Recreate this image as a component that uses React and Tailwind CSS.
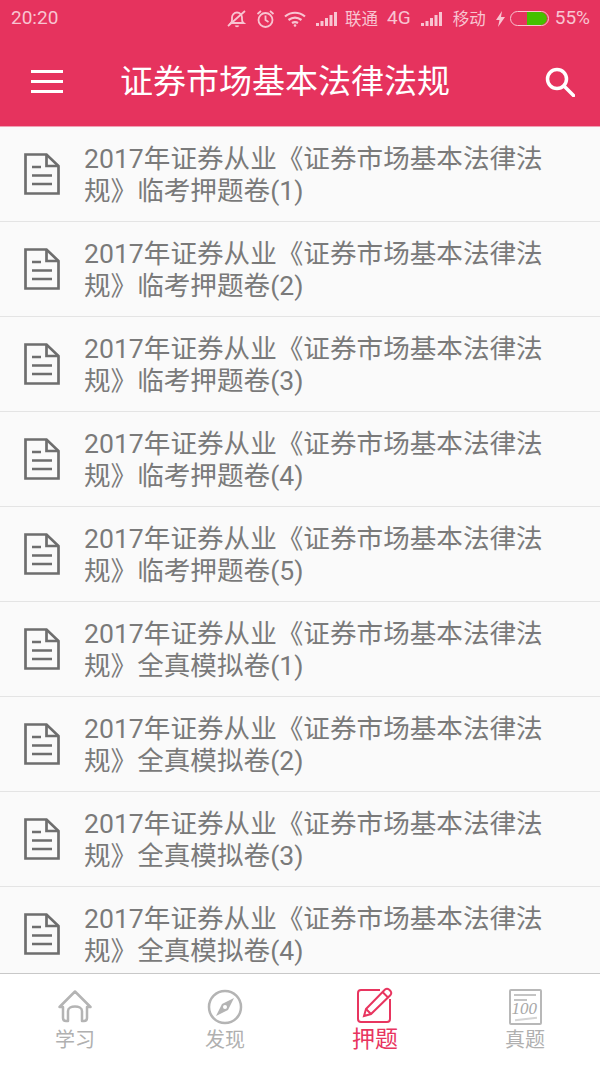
import React from 'react';

const papers = [
  '临考押题卷(1)', '临考押题卷(2)', '临考押题卷(3)', '临考押题卷(4)', '临考押题卷(5)',
  '全真模拟卷(1)', '全真模拟卷(2)', '全真模拟卷(3)', '全真模拟卷(4)',
];

const Signal = () => (
  <svg width="21" height="15" viewBox="0 0 21 15" fill="currentColor">
    <rect x="0" y="12" width="3" height="3" />
    <rect x="4.500" y="10" width="3" height="5" />
    <rect x="9" y="7" width="3" height="8" />
    <rect x="13.500" y="4" width="3" height="11" />
    <rect x="18" y="1" width="3" height="14" />
  </svg>
);

const StatusBar = () => (
  <div className="h-[37px] flex items-center justify-between pl-[11px] pr-[10px] text-[#f8c4d1] text-[19px] font-['Roboto',sans-serif]">
    <span>20:20</span>
    <div className="flex items-center">
      {/* muted bell */}
      <svg className="mr-[9px]" width="20" height="20" viewBox="0 0 20 20" fill="none" stroke="currentColor" strokeWidth="1.800">
        <path d="M4 14c1.500-1.500 1-3 1-5.500C5 6 7 3.500 10 3.500S15 6 15 8.500c0 2.500-.5 4 1.500 5.500z" />
        <path d="M8.500 16.500c.5 1.200 2.500 1.200 3 0" />
        <path d="M1 17 18 2" />
      </svg>
      {/* alarm clock */}
      <svg className="mr-[9px]" width="19" height="20" viewBox="0 0 19 20" fill="none" stroke="currentColor" strokeWidth="1.800">
        <circle cx="9.500" cy="11" r="7" />
        <path d="M9.500 6.500V11l3 2" />
        <path d="M1.500 5 5 2M17.500 5 14 2" />
      </svg>
      {/* wifi */}
      <svg className="mr-[10px]" width="22" height="16" viewBox="0 0 22 16" fill="none" stroke="currentColor" strokeWidth="2.200">
        <path d="M1 5.500c6-5 14-5 20 0" />
        <path d="M4.500 9c4-3 9-3 13 0" />
        <path d="M8 12c2-1.300 4-1.300 6 0" />
        <circle cx="11" cy="14.500" r="1.300" fill="currentColor" stroke="none" />
      </svg>
      <Signal />
      <span className="ml-[8px] mr-[9px] font-['Noto_Sans_CJK_SC',sans-serif] text-[16.500px]">联通</span>
      <span className="mr-[10px]">4G</span>
      <Signal />
      <span className="ml-[11px] mr-[10px] font-['Noto_Sans_CJK_SC',sans-serif] text-[16.500px]">移动</span>
      <svg className="mr-[5px]" width="9" height="16" viewBox="0 0 9 16" fill="currentColor">
        <path d="M6 0 0 9h3.500L2 16l7-10H5z" />
      </svg>
      <div className="w-[39px] h-[15px] rounded-full border border-[#f8c4d1] flex justify-end items-center pr-[1px] mr-[6px]">
        <div className="w-[20px] h-[13px] bg-[#45c000] rounded-r-full" />
      </div>
      <span>55%</span>
    </div>
  </div>
);

const Header = () => (
  <div className="bg-[#e6335e] shrink-0 h-[127px] border-b border-[#f0a0b4]">
    <StatusBar />
    <div className="h-[89px] flex items-center pl-[31px] pr-[25px]">
      {/* three bar menu */}
      <svg width="32" height="23" viewBox="0 0 32 23" fill="#fff">
        <rect x="0" y="0" width="32" height="3" />
        <rect x="0" y="10" width="32" height="3" />
        <rect x="0" y="20" width="32" height="3" />
      </svg>
      <h1 className="ml-[57px] flex-1 text-white text-[33px] font-normal whitespace-nowrap">证券市场基本法律法规</h1>
      <svg width="30" height="30" viewBox="0 0 30 30" fill="none" stroke="#fff" strokeWidth="3.500">
        <circle cx="12" cy="12" r="9.500" />
        <path d="M19 19 28.500 28.500" strokeLinecap="round" />
      </svg>
    </div>
  </div>
);

const DocIcon = () => (
  <svg width="36" height="42" viewBox="0 0 36 42" fill="none" stroke="#6e6e6e" strokeWidth="2.700">
    <path d="M1.500 1.500h21L34.500 13v27.500h-33z" />
    <path d="M22.500 1.500V13h12" />
    <path d="M8 14h9M8 22.500h20M8 31h20" />
  </svg>
);

const PaperRow = ({ name }) => (
  <div className="h-[95px] pl-[16px] border-b border-[#e4e4e4] flex items-center shrink-0">
    <div className="ml-[8px] w-[36px] shrink-0 mr-[24px]">
      <DocIcon />
    </div>
    <p className="text-[#7a7a7a] text-[26.600px] leading-[32px] w-[470px] break-all mt-[1px]">
      {`2017年证券从业《证券市场基本法律法规》${name}`}
    </p>
  </div>
);

const Tab = ({ icon, label, active }) => (
  <div className="flex-1 flex flex-col items-center pt-[14px]">
    <div className="h-[38px] flex items-center justify-center">{icon}</div>
    <span className={active ? 'text-[#e8355f] text-[23px] leading-[28px]' : 'text-[#b0b0b0] text-[20px] leading-[28px]'}>{label}</span>
  </div>
);

const TabBar = () => (
  <div className="shrink-0 h-[94px] bg-white border-t border-[#c8c8c8] flex">
    <Tab
      label="学习"
      icon={
        <svg width="34" height="34" viewBox="0 0 34 34" fill="none" stroke="#b4b4b4" strokeWidth="2.500" strokeLinejoin="round">
          <path d="M8 31c-2 0-3-1-3-3V17H1.500L17 1.500 32.500 17H29v11c0 2-1 3-3 3h-2V21c0-6-14-6-14 0v10z" />
        </svg>
      }
    />
    <Tab
      label="发现"
      icon={
        <svg width="36" height="36" viewBox="0 0 36 36" fill="none">
          <circle cx="18" cy="18" r="16" stroke="#b4b4b4" strokeWidth="2.500" />
          <path d="M27 9 21 21 9 27l6-12z" fill="#b4b4b4" />
          <circle cx="18" cy="18" r="2" fill="#fff" />
        </svg>
      }
    />
    <Tab
      active
      label="押题"
      icon={
        <svg className="-mt-[4px]" width="36" height="36" viewBox="0 0 36 36" fill="none" stroke="#e8355f" strokeWidth="2">
          <path d="M23 3H4Q1 3 1 6v26q0 3 3 3h26q3 0 3-3V12" />
          <path d="M9 22 28 2.500q2-1.500 4 0l1.500 1.500q1.500 2 0 4L14 27l-7 2z" />
          <path d="M25.500 5l6 6M9 22l5 5" />
        </svg>
      }
    />
    <Tab
      label="真题"
      icon={
        <div className="relative w-[33px] h-[36px] border-2 border-[#b8b8b8] rounded-[2px]">
          <div className="absolute left-[3px] top-[3px] w-[22px] h-[1.500px] bg-[#c4c4c4]" />
          <div className="absolute left-[3px] top-[8px] w-[13px] h-[1.500px] bg-[#c4c4c4]" />
          <span className="absolute left-[1px] top-[10px] text-[#a8a8a8] text-[17px] leading-[16px] italic font-['Liberation_Serif',serif]">100</span>
          <div className="absolute left-[4px] bottom-[3px] w-[22px] h-[2px] bg-[#d4d4d4] -rotate-6" />
        </div>
      }
    />
  </div>
);

export default function App() {
  return (
    <div className="w-[600px] h-[1067px] flex flex-col overflow-hidden bg-[#fafafa] font-['Roboto','Noto_Sans_CJK_SC',sans-serif]">
      <Header />
      <div className="flex-1 overflow-hidden flex flex-col">
        {papers.map((name) => (
          <PaperRow key={name} name={name} />
        ))}
      </div>
      <TabBar />
    </div>
  );
}
